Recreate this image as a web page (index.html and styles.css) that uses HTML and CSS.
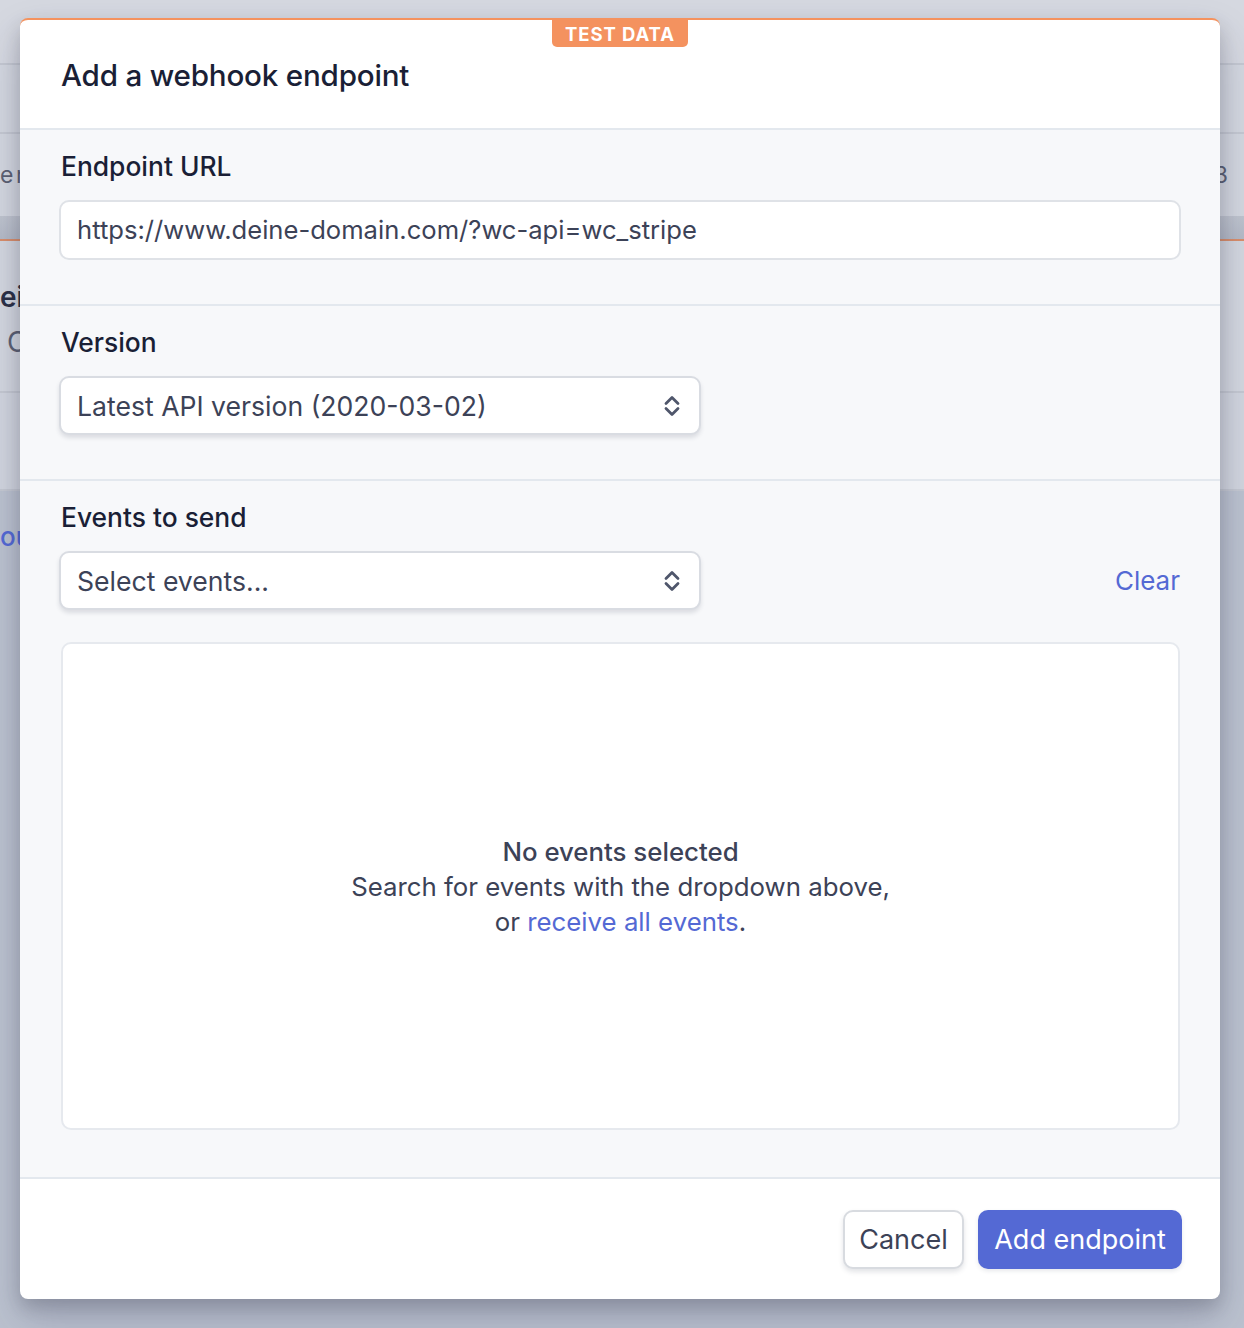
FILE: index.html
```html
<!DOCTYPE html>
<html lang="en">
<head>
<meta charset="utf-8">
<title>Add a webhook endpoint</title>
<link rel="stylesheet" href="styles.css">
</head>
<body>
<div class="page">
  <div class="bg-bar bg-bar-1"></div>
  <div class="bg-bar bg-bar-2"></div>
  <div class="bg-row">
    <span class="bg-frag">e r</span>
    <span class="bg-frag bg-num">3</span>
  </div>
  <div class="bg-band"></div>
  <div class="bg-section">
    <span class="bg-strong">eiv</span>
    <span class="bg-frag bg-c">C</span>
  </div>
  <div class="bg-bar bg-bar-3"></div>
  <div class="bg-dark">
    <span class="bg-link">ou</span>
  </div>
</div>

<div class="modal" role="dialog" aria-labelledby="modal-title">
  <div class="badge">TEST DATA</div>
  <header class="modal-header">
    <h1 id="modal-title" class="modal-title">Add a webhook endpoint</h1>
  </header>

  <section class="section">
    <label class="label" for="url">Endpoint URL</label>
    <div class="input" id="url">https://www.deine-domain.com/?wc-api=wc_stripe</div>
  </section>

  <section class="section">
    <div class="label">Version</div>
    <div class="select">
      <span>Latest API version (2020-03-02)</span>
      <svg class="chev" width="16" height="24" viewBox="0 0 16 24" aria-hidden="true">
        <polyline points="2,9.5 8,3.5 14,9.5" fill="none" stroke="#4f566b" stroke-width="2.8" stroke-linecap="round" stroke-linejoin="round"/>
        <polyline points="2,14.5 8,20.5 14,14.5" fill="none" stroke="#4f566b" stroke-width="2.8" stroke-linecap="round" stroke-linejoin="round"/>
      </svg>
    </div>
  </section>

  <section class="section section-events">
    <div class="label">Events to send</div>
    <div class="events-row">
      <div class="select">
        <span>Select events...</span>
        <svg class="chev" width="16" height="24" viewBox="0 0 16 24" aria-hidden="true">
          <polyline points="2,9.5 8,3.5 14,9.5" fill="none" stroke="#4f566b" stroke-width="2.8" stroke-linecap="round" stroke-linejoin="round"/>
          <polyline points="2,14.5 8,20.5 14,14.5" fill="none" stroke="#4f566b" stroke-width="2.8" stroke-linecap="round" stroke-linejoin="round"/>
        </svg>
      </div>
      <a class="link clear" href="#">Clear</a>
    </div>
    <div class="events-box">
      <p class="empty">
        <span class="empty-title">No events selected</span><br>
        Search for events with the dropdown above,<br>
        or <a class="link" href="#">receive all events</a>.
      </p>
    </div>
  </section>

  <footer class="modal-footer">
    <button class="btn btn-secondary" type="button">Cancel</button>
    <button class="btn btn-primary" type="button">Add endpoint</button>
  </footer>
</div>
</body>
</html>
```

FILE: styles.css
```css
* { box-sizing: border-box; }

html, body {
  margin: 0;
  padding: 0;
}

body {
  width: 1244px;
  height: 1328px;
  overflow: hidden;
  position: relative;
  font-family: Inter, "Noto Sans", "Liberation Sans", sans-serif;
  color: #3c4257;
  background: #bbc2cf;
}

/* ---------- dimmed background page ---------- */
.page {
  display: flex;
  flex-direction: column;
  height: 1328px;
}

.bg-bar {
  background: #d3d7df;
  border-bottom: 2px solid #c4c8d1;
}
.bg-bar-1 { height: 65px; background: #d5d8e0; }
.bg-bar-2 { height: 69px; }
.bg-bar-3 { height: 98px; background: #d1d5de; }

.bg-row {
  height: 82px;
  background: #d3d7df;
  display: flex;
  align-items: center;
  justify-content: space-between;
  font-size: 23px;
  color: #5b6072;
}
.bg-row .bg-frag:first-child { letter-spacing: -2px; }
.bg-num { margin-right: 16px; }

.bg-band {
  height: 25px;
  background: linear-gradient(#bfc4ce, #b4bac6);
  border-bottom: 2px solid #d98e6b;
}

.bg-section {
  height: 152px;
  background: #d3d7df;
  border-bottom: 2px solid #c4c8d1;
  display: flex;
  flex-direction: column;
  align-items: flex-start;
  padding-top: 40px;
}
.bg-strong {
  font-size: 28px;
  font-weight: 600;
  color: #2a2f45;
  line-height: 32px;
}
.bg-c {
  font-size: 28px;
  color: #5b6072;
  margin-top: 12px;
  margin-left: 7px;
}

.bg-dark {
  flex: 1;
  background: #bbc2cf;
  padding-top: 30px;
}
.bg-link {
  font-size: 26px;
  color: #5469d4;
  font-weight: 500;
}

/* ---------- modal ---------- */
.modal {
  position: absolute;
  top: 18px;
  left: 20px;
  width: 1200px;
  background: #fff;
  border-top: 2px solid #f5925e;
  border-radius: 8px;
  box-shadow: 0 20px 40px rgba(50, 50, 93, 0.22), 0 8px 18px rgba(0, 0, 0, 0.16);
  overflow: hidden;
}

.badge {
  position: absolute;
  top: 0;
  left: 532px;
  width: 136px;
  height: 27px;
  background: #f4925f;
  color: #fff;
  font-size: 18.5px;
  font-weight: 700;
  letter-spacing: 0.9px;
  line-height: 28px;
  text-align: center;
  border-radius: 0 0 5px 5px;
}

.modal-header {
  padding: 37px 41px 35px;
  border-bottom: 2px solid #e3e8ee;
}
.modal-title {
  margin: 0;
  font-size: 29.6px;
  line-height: 36px;
  font-weight: 500;
  color: #1a1f36;
  letter-spacing: -0.2px;
}

.section {
  background: #f7f8fa;
  padding: 18px 39px 44px;
  border-bottom: 2px solid #e3e8ee;
  display: flex;
  flex-direction: column;
  align-items: flex-start;
}
.section-events {
  padding-bottom: 47px;
}

.label {
  font-size: 26.4px;
  line-height: 36px;
  font-weight: 500;
  color: #1a1f36;
  margin: 0 0 16px 2px;
}

.input {
  width: 100%;
  height: 60px;
  background: #fff;
  border: 2px solid #dfe2e7;
  border-radius: 10px;
  padding: 0 16px;
  font-size: 25.6px;
  line-height: 56px;
  color: #3c4257;
  white-space: nowrap;
}

.select {
  width: 642px;
  height: 59px;
  background: #fff;
  border: 2px solid #d9dce2;
  border-radius: 10px;
  box-shadow: 0 3px 4px rgba(60, 66, 87, 0.14);
  display: flex;
  align-items: center;
  justify-content: space-between;
  padding: 0 19px 0 16px;
  font-size: 26.6px;
  color: #3c4257;
  white-space: nowrap;
}
.chev { display: block; flex: none; }

.events-row {
  width: 100%;
  display: flex;
  align-items: center;
  justify-content: space-between;
}

.link {
  color: #5469d4;
  text-decoration: none;
}
.clear {
  font-size: 26px;
  margin-right: 1px;
}

.events-box {
  margin: 32px 1px 0 2px;
  align-self: stretch;
  height: 488px;
  background: #fff;
  border: 2px solid #e6e9ee;
  border-radius: 10px;
  display: flex;
  align-items: center;
  justify-content: center;
}
.empty {
  margin: 0;
  text-align: center;
  font-size: 25.8px;
  line-height: 35px;
  color: #3c4257;
}
.empty-title {
  font-weight: 500;
}

.modal-footer {
  height: 120px;
  display: flex;
  align-items: center;
  justify-content: flex-end;
  gap: 14px;
  padding: 0 38px 0 0;
}

.btn {
  height: 59px;
  border-radius: 10px;
  font-family: inherit;
  font-size: 27px;
  padding: 0;
  white-space: nowrap;
  cursor: pointer;
}
.btn-secondary {
  width: 121px;
  background: #fff;
  color: #3c4257;
  border: 2px solid #d8dbe0;
  box-shadow: 0 3px 5px rgba(60, 66, 87, 0.14);
}
.btn-primary {
  width: 204px;
  background: #5469d4;
  color: #fff;
  border: 0;
  box-shadow: 0 2px 4px rgba(60, 66, 87, 0.12);
}
```
